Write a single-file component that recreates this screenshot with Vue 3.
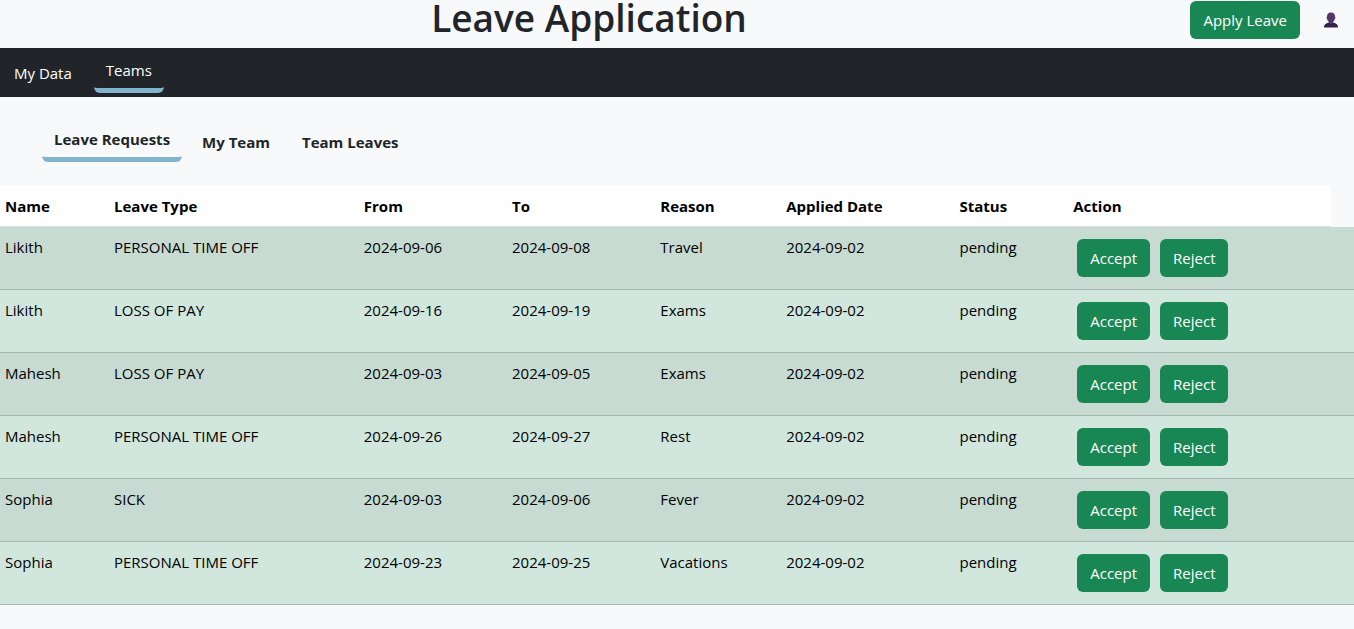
<script setup>
import { ref } from 'vue'

const mainTab = ref('Teams')
const subTab = ref('Leave Requests')
const mainTabs = ['My Data', 'Teams']
const subTabs = ['Leave Requests', 'My Team', 'Team Leaves']
const headings = ['Name', 'Leave Type', 'From', 'To', 'Reason', 'Applied Date', 'Status', 'Action']
const columns = ['name', 'type', 'from', 'to', 'reason', 'applied', 'status', 'action', 'extra']
const requests = [
  ['Likith', 'PERSONAL TIME OFF', '2024-09-06', '2024-09-08', 'Travel', '2024-09-02', 'pending'],
  ['Likith', 'LOSS OF PAY', '2024-09-16', '2024-09-19', 'Exams', '2024-09-02', 'pending'],
  ['Mahesh', 'LOSS OF PAY', '2024-09-03', '2024-09-05', 'Exams', '2024-09-02', 'pending'],
  ['Mahesh', 'PERSONAL TIME OFF', '2024-09-26', '2024-09-27', 'Rest', '2024-09-02', 'pending'],
  ['Sophia', 'SICK', '2024-09-03', '2024-09-06', 'Fever', '2024-09-02', 'pending'],
  ['Sophia', 'PERSONAL TIME OFF', '2024-09-23', '2024-09-25', 'Vacations', '2024-09-02', 'pending']
]
</script>

<template>
  <div class="page">
    <header class="top">
      <h1>Leave Application</h1>
      <div class="tools">
        <button class="btn" type="button">Apply Leave</button>
        <button class="profile" type="button" aria-label="Profile">
          <svg viewBox="0 0 14 16" width="14" height="16" aria-hidden="true">
            <path fill="#37204a" d="M0 15.5C0 12.5 1.500 11.300 5 10.500H9C12.500 11.300 14 12.500 14 15.500Z" />
            <path fill="#543769" d="M7 0.500C4.300 0.500 2.900 2.200 3 4.800C2.400 4.800 2.500 6.600 3.200 7C3.500 8.400 4.100 9.200 4.800 9.800V10.800L7 12.500L9.200 10.800V9.800C9.900 9.200 10.500 8.400 10.800 7C11.500 6.600 11.600 4.800 11 4.800C11.100 2.200 9.700 0.500 7 0.500Z" />
          </svg>
        </button>
      </div>
    </header>

    <nav class="main-nav">
      <button
        v-for="tab in mainTabs"
        :key="tab"
        type="button"
        class="tab"
        :class="{ active: tab === mainTab }"
        @click="mainTab = tab"
      >{{ tab }}</button>
    </nav>

    <nav class="sub-nav">
      <button
        v-for="tab in subTabs"
        :key="tab"
        type="button"
        class="tab"
        :class="{ active: tab === subTab }"
        @click="subTab = tab"
      >{{ tab }}</button>
    </nav>

    <table>
      <colgroup>
        <col v-for="c in columns" :key="c" :class="'col-' + c">
      </colgroup>
      <thead>
        <tr>
          <th v-for="h in headings" :key="h" scope="col">{{ h }}</th>
        </tr>
      </thead>
      <tbody>
        <tr v-for="(row, i) in requests" :key="i">
          <td v-for="(cell, j) in row" :key="j">{{ cell }}</td>
          <td>
            <div class="actions">
              <button class="btn" type="button">Accept</button>
              <button class="btn" type="button">Reject</button>
            </div>
          </td>
          <td></td>
        </tr>
      </tbody>
    </table>
  </div>
</template>

<style>
body {
  margin: 0;
  background: #f8f9fa;
}
</style>

<style scoped>
.page {
  font-family: "Segoe UI", "Open Sans", "Noto Sans", sans-serif;
  font-size: 15px;
  line-height: 24px;
  color: #212529;
}

button {
  font: inherit;
  cursor: pointer;
}

.top {
  display: grid;
  grid-template-columns: 87% 13%;
  height: 48px;
}

h1 {
  margin: 0;
  font-size: 37px;
  font-weight: 600;
  line-height: 36px;
  text-align: center;
}

.tools {
  display: flex;
  align-items: center;
  justify-content: flex-end;
  gap: 24px;
  height: 40px;
  padding-right: 16px;
}

.btn {
  padding: 7px 13px;
  border: 0;
  border-radius: 6px;
  background: #198754;
  color: #fff;
  white-space: nowrap;
}

.profile {
  display: flex;
  padding: 0;
  border: 0;
  background: none;
}

.main-nav,
.sub-nav {
  display: flex;
  align-items: center;
}

.main-nav {
  gap: 10px;
  padding: 4px 2px;
  background: #212529;
}

.sub-nav {
  gap: 8px;
  padding: 24px 42px;
  font-weight: 700;
}

.tab {
  padding: 6px 12px;
  border: 0;
  background: none;
  color: inherit;
}

.main-nav .tab {
  color: #fff;
}

.tab.active {
  border-bottom: 5px solid #82b3cc;
  border-radius: 6px;
}

table {
  width: 100%;
  table-layout: fixed;
  border-collapse: collapse;
  color: #000;
}

.col-name { width: 8.05%; }
.col-type { width: 18.45%; }
.col-from { width: 10.95%; }
.col-to { width: 10.95%; }
.col-reason { width: 9.3%; }
.col-applied { width: 12.8%; }
.col-status { width: 8.4%; }
.col-action { width: 19.4%; }
.col-extra { width: 1.7%; }

th,
td {
  padding: 8px 5px;
  text-align: left;
  vertical-align: top;
  white-space: nowrap;
}

th {
  background: #fff;
  border-bottom: 1px solid #dee2e6;
  font-weight: 700;
}

td {
  background: #d1e7dd;
  border-bottom: 1px solid #a7b9b1;
}

td:last-child {
  padding: 0;
}

tbody tr:nth-child(odd) td {
  background: #c7dbd2;
}

.actions {
  display: flex;
  gap: 10px;
  padding: 4px;
}
</style>
